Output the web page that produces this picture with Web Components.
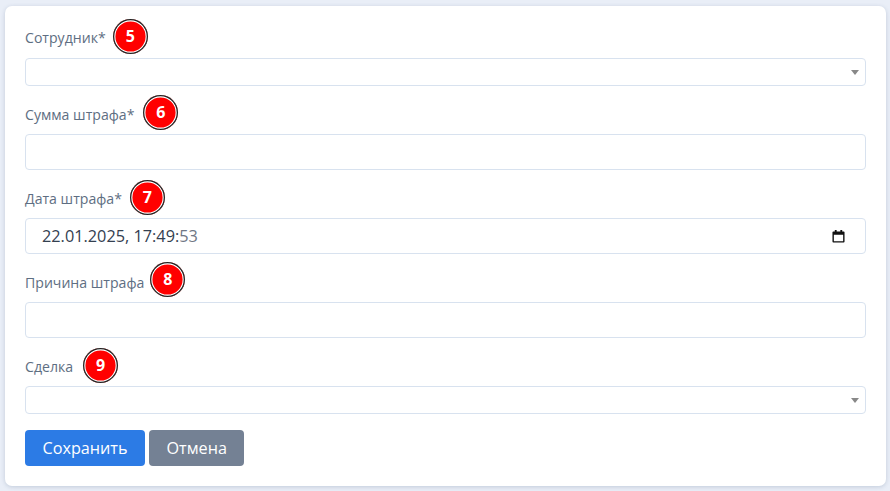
<!DOCTYPE html>
<html lang="ru">
<head>
<meta charset="utf-8">
<title>Штраф</title>
<style>
html,body{margin:0;height:100%;background:#e9eef7;font-family:"Open Sans","Noto Sans",sans-serif;overflow:hidden}
body{padding:6px 4px 5px 5px;box-sizing:border-box}
</style>
</head>
<body>
<template id="t-card">
<style>
:host{display:block;background:#fff;border-radius:7px;padding:22px 20px 20px;box-shadow:0 1px 4px rgba(60,80,120,.22);box-sizing:border-box;height:480px}
</style>
<slot></slot>
</template>
<template id="t-badge">
<style>
:host{display:inline-flex;align-items:center;justify-content:center;box-sizing:border-box;width:35px;height:35px;border-radius:50%;background:#f00;color:#fff;font:700 16px/1 "Open Sans",sans-serif;box-shadow:inset 0 0 0 1.300px #222,inset 0 0 0 2.400px #fff;margin:-8px 0 -8px var(--dx,8px);flex:none;transform:translateY(var(--dy,-3px))}
</style>
<slot></slot>
</template>
<template id="t-field">
<style>
:host{display:block;margin-bottom:19px}
:host(:first-child) .row{margin-bottom:10px}
.row{display:flex;align-items:center;height:20px;margin-bottom:9px;font:14.1px/20px "Open Sans",sans-serif;color:#5e6e82}
.box{box-sizing:border-box;display:flex;align-items:center;border:1px solid #d8e2ef;border-radius:4px;background:#fff;height:36px;padding:0 16px;font:16.3px/24px "Open Sans",sans-serif;color:#344050}
:host([kind=select]) .box{height:28px;padding:0 6px 0 16px;justify-content:flex-end}
:host([kind=date]) .box{padding-right:20px;justify-content:space-between}
</style>
<div class="row"><span id="l"></span><slot name="badge"></slot></div>
<div class="box"><slot></slot></div>
</template>
<template id="t-btn">
<style>
:host{display:inline-flex;align-items:center;justify-content:center;box-sizing:border-box;height:36px;padding:0 17.500px;border-radius:4px;color:#fff;font:16.2px/24px "Open Sans",sans-serif;background:#2c7be5}
:host([kind=gray]){background:#748194}
</style>
<slot></slot>
</template>
<template id="t-actions">
<style>:host{display:flex;gap:4px;margin-top:-3px}</style>
<slot></slot>
</template>
<fine-card>
<form-field kind="select" label="Сотрудник*"><step-badge slot="badge" style="--dx:7px;--dy:-2px">5</step-badge><svg width="8" height="5" viewBox="0 0 8 5"><path d="M0 0h8L4 5z" fill="#888"/></svg></form-field>
<form-field label="Сумма штрафа*"><step-badge slot="badge" style="--dx:9px;--dy:-3px">6</step-badge></form-field>
<form-field kind="date" label="Дата штрафа*"><step-badge slot="badge" style="--dx:8px;--dy:-2px">7</step-badge><span>22.01.2025, 17:49:<span style="color:#6f7785">53</span></span><svg width="13" height="13" viewBox="0 0 14 14"><path fill="#111" d="M3 0h2v1.500h4V0h2v1.500h1.500A1 1 0 0 1 13.500 2.500v10a1 1 0 0 1-1 1h-11a1 1 0 0 1-1-1v-10a1 1 0 0 1 1-1H3zM2 5v7h10V5z"/></svg></form-field>
<form-field label="Причина штрафа"><step-badge slot="badge" style="--dx:6px;--dy:-4px">8</step-badge></form-field>
<form-field kind="select" label="Сделка"><step-badge slot="badge" style="--dx:10px;--dy:-2px">9</step-badge><svg width="8" height="5" viewBox="0 0 8 5"><path d="M0 0h8L4 5z" fill="#888"/></svg></form-field>
<form-actions><ui-btn>Сохранить</ui-btn><ui-btn kind="gray">Отмена</ui-btn></form-actions>
</fine-card>
<script>
function def(name,tpl,init){customElements.define(name,class extends HTMLElement{constructor(){super();const r=this.attachShadow({mode:"open"});r.appendChild(document.getElementById(tpl).content.cloneNode(true));}connectedCallback(){if(init)init(this);}});}
def("fine-card","t-card");
def("step-badge","t-badge");
def("form-field","t-field",el=>{el.shadowRoot.getElementById("l").textContent=el.getAttribute("label");});
def("ui-btn","t-btn");
def("form-actions","t-actions");
</script>
</body>
</html>
